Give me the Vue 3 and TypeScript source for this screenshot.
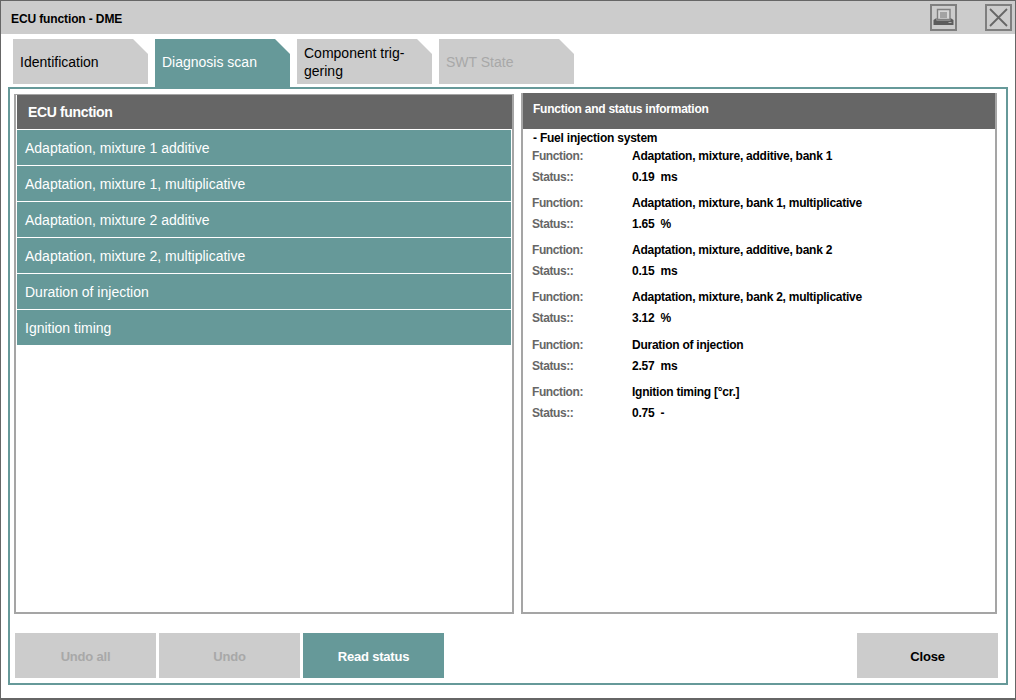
<script setup lang="ts">
const tabs = [
  { label: 'Identification', cls: '' },
  { label: 'Diagnosis scan', cls: 'active' },
  { label: 'Component trig-\ngering', cls: 'multi' },
  { label: 'SWT State', cls: 'disabled' },
]
const fns = [
  'Adaptation, mixture 1 additive',
  'Adaptation, mixture 1, multiplicative',
  'Adaptation, mixture 2 additive',
  'Adaptation, mixture 2, multiplicative',
  'Duration of injection',
  'Ignition timing',
]
const info = [
  { f: 'Adaptation, mixture, additive, bank 1', s: '0.19  ms' },
  { f: 'Adaptation, mixture, bank 1, multiplicative', s: '1.65  %' },
  { f: 'Adaptation, mixture, additive, bank 2', s: '0.15  ms' },
  { f: 'Adaptation, mixture, bank 2, multiplicative', s: '3.12  %' },
  { f: 'Duration of injection', s: '2.57  ms' },
  { f: 'Ignition timing [°cr.]', s: '0.75  -' },
]
</script>

<template>
  <div class="win">
    <header class="titlebar">
      <span class="title">ECU function - DME</span>
      <button class="icon-btn print" aria-label="Print">
        <svg width="23" height="23" viewBox="0 0 23 23">
          <path d="M5.500 3.500h12.500v10H5.500z" fill="#d6d6d6" stroke="#808080" stroke-width="1.400" />
          <path d="M8 7h7M8 9h7M8 11h7" stroke="#707070" stroke-width="1" />
          <path d="M1.500 14l3-2v2.500h14V12l3 2v5h-20z" fill="#5c5c5c" />
          <path d="M16.500 16.500h3" stroke="#b0b0b0" stroke-width="1" />
        </svg>
      </button>
      <button class="icon-btn close-x" aria-label="Close window">
        <svg width="23" height="23" viewBox="0 0 23 23">
          <path d="M3 3l17 17M20 3L3 20" stroke="#666" stroke-width="1.800" fill="none" />
        </svg>
      </button>
    </header>

    <nav class="tabs">
      <div v-for="t in tabs" :key="t.label" class="tab" :class="t.cls">{{ t.label }}</div>
    </nav>

    <section class="frame">
      <div class="panels">
        <div class="panel left">
          <div class="left-head">ECU function</div>
          <div v-for="f in fns" :key="f" class="fn-row">{{ f }}</div>
        </div>
        <div class="panel right">
          <div class="right-head">Function and status information</div>
          <div class="group">- Fuel injection system</div>
          <div class="blocks">
            <div v-for="i in info" :key="i.f" class="block">
              <div class="kv"><span class="k">Function:</span><span class="v">{{ i.f }}</span></div>
              <div class="kv"><span class="k">Status::</span><span class="v pre">{{ i.s }}</span></div>
            </div>
          </div>
        </div>
      </div>
      <footer class="actions">
        <button class="act off">Undo all</button>
        <button class="act off">Undo</button>
        <button class="act on">Read status</button>
        <button class="act end">Close</button>
      </footer>
    </section>
  </div>
</template>

<style>
html, body { margin: 0; background: #fff; }
</style>

<style scoped>
.win {
  width: 1016px;
  height: 700px;
  box-sizing: border-box;
  border: 1px solid #666;
  border-bottom-width: 2px;
  background: #fff;
  font-family: "Liberation Sans", Arial, sans-serif;
  display: flex;
  flex-direction: column;
  color: #000;
  overflow: hidden;
}
.titlebar {
  height: 33px;
  flex: none;
  background: #ccc;
  display: flex;
  align-items: center;
  padding: 0 3px 0 10px;
}
.title { font-size: 12px; font-weight: 700; letter-spacing: -0.12px; flex: 1; padding-top: 2px; }
.icon-btn {
  width: 27px;
  height: 27px;
  padding: 0;
  margin: 0;
  box-sizing: border-box;
  background: transparent;
  border: 2px solid #7f7f7f;
  display: flex;
  align-items: center;
  justify-content: center;
}
.print { margin-right: 28px; }
.tabs {
  display: flex;
  gap: 7px;
  padding: 5px 0 0 12px;
  flex: none;
  box-sizing: border-box;
  height: 53px;
}
.tab {
  width: 135px;
  height: 45px;
  box-sizing: border-box;
  padding: 1px 7px 0;
  background: #ccc;
  font-size: 14px;
  line-height: 18px;
  display: flex;
  align-items: center;
  white-space: pre-line;
  clip-path: polygon(0 0, 120px 0, 135px 15px, 135px 100%, 0 100%);
}
.tab.active { background: #669999; color: #fff; height: 48px; padding-bottom: 3px; }
.tab.disabled { color: #a8a8a8; }
.frame {
  margin: 0 7px;
  height: 598px;
  box-sizing: border-box;
  border: 2px solid #669999;
  display: flex;
  flex-direction: column;
  background: #fff;
}
.panels {
  display: flex;
  gap: 7px;
  padding: 4px 9px 0 4px;
  height: 525px;
  box-sizing: border-box;
}
.panel {
  border: 2px solid #a5a5a5;
  box-sizing: border-box;
  background: #fff;
}
.left { width: 500px; margin-top: 1px; height: 520px; border-top-width: 1px; }
.right { width: 476px; height: 521px; border-top: 0; display: flex; flex-direction: column; }
.left-head {
  height: 34px;
  margin-left: 1px;
  background: #666;
  color: #fff;
  font-size: 14px;
  font-weight: 700;
  letter-spacing: -0.35px;
  line-height: 35px;
  padding-left: 11px;
  border-bottom: 1px solid #fff;
}
.fn-row {
  height: 35px;
  margin: 0 1px;
  background: #669999;
  color: #fff;
  font-size: 14px;
  line-height: 36px;
  padding-left: 8px;
  border-bottom: 1px solid #fff;
}
.right-head {
  height: 36px;
  background: #666;
  color: #fff;
  font-size: 12px;
  font-weight: 700;
  letter-spacing: -0.25px;
  line-height: 33px;
  padding-left: 10px;
  flex: none;
}
.group { font-size: 12px; font-weight: 700; letter-spacing: -0.22px; line-height: 14px; padding: 2px 0 0 10px; }
.blocks { display: flex; flex-direction: column; gap: 12.15px; padding-top: 4px; }
.block { display: flex; flex-direction: column; gap: 7px; padding-left: 9px; }
.kv { display: flex; font-size: 12px; line-height: 14px; height: 14px; }
.k { width: 100px; color: #666; font-weight: 700; letter-spacing: -0.4px; flex: none; }
.v { font-weight: 700; letter-spacing: -0.25px; }
.pre { white-space: pre; }
.actions {
  display: flex;
  gap: 3px;
  padding: 19px 8px 0 5px;
}
.act {
  width: 141px;
  height: 45px;
  border: 0;
  padding: 2px 0 0;
  font: 700 13px "Liberation Sans", Arial, sans-serif;
  letter-spacing: -0.2px;
  background: #ccc;
  color: #000;
}
.act.off { color: #a8a8a8; }
.act.on { background: #669999; color: #fff; }
.act.end { margin-left: auto; }
</style>
